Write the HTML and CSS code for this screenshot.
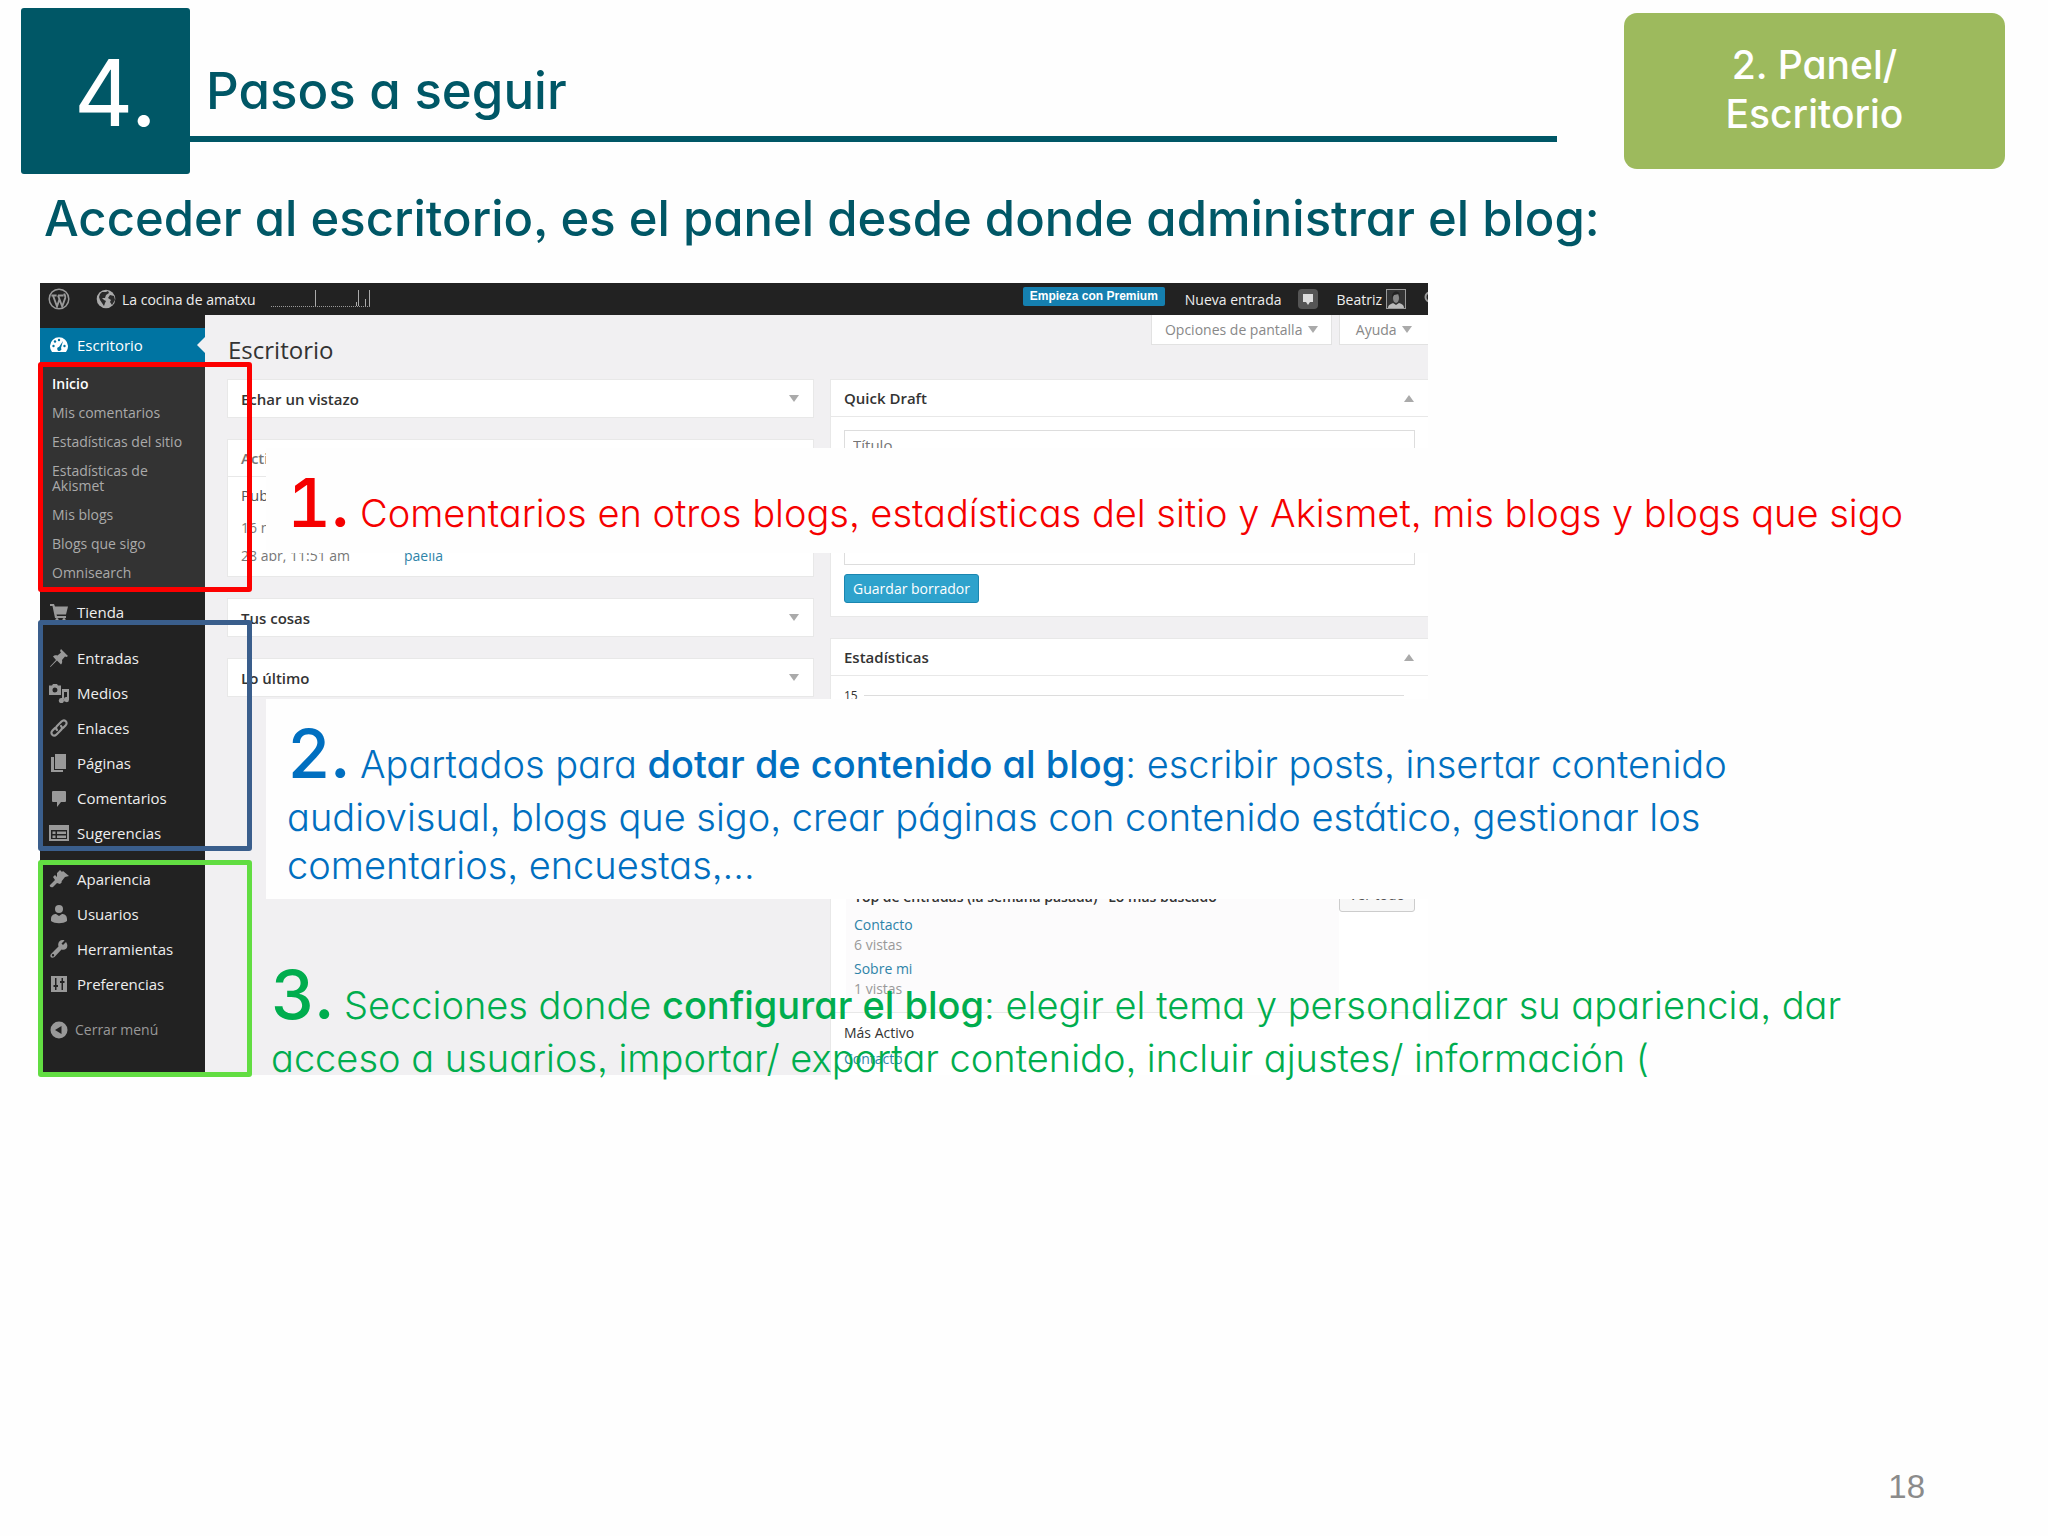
FILE: index.html
```html
<!DOCTYPE html>
<html lang="es">
<head>
    <meta charset="UTF-8">
    <meta name="viewport" content="width=device-width, initial-scale=1.0">
    <title>Pasos a seguir</title>
    <link rel="stylesheet" href="styles.css">
</head>
<body>
    <header class="slide-header">
        <div class="number">4.</div>
        <h1>Pasos a seguir</h1>
        <div class="badge">2. Panel/<br>Escritorio</div>
    </header>
    <h2 class="lead">Acceder al escritorio, es el panel desde donde administrar el blog:</h2>

    <main class="stage">
        <div class="dashboard">
            <div class="topbar">
                <svg class="wp" viewBox="0 0 22 22"><circle cx="11" cy="11" r="9.8" fill="none" stroke="#999" stroke-width="1.5"/><path d="M3.4 7.5h5.2M10 7.5h5.6M5 7.5l4 11 2.4-7M10 7.5l1.4 3.5 2.8 7.5 3-8.5c.6-2-.6-3.4-1-4.5" fill="none" stroke="#999" stroke-width="1.9"/></svg>
                <svg class="globe" viewBox="0 0 20 20"><circle cx="10" cy="10" r="9.3" fill="#aaa"/><path d="M6 3l4 0 2-1 1 2-3 2-1 3-3 0 2 2 2 1-1 2-1 3-2-3-2-3-1-3 1-3zM14 6l4 1 1 4-3 5-2-3 1-2-3-2z" fill="#2b2b2b"/></svg>
                <a href="#">La cocina de amatxu</a>
                <svg class="spark" viewBox="0 0 100 18"><path d="M0 16.5h100" stroke="#999" stroke-dasharray="1 1"/><path d="M44.500 0v16M87.500 0v16M98.500 0v16M94.500 9v7M85.500 12v4" stroke="#aaa" fill="none"/></svg>
                <div class="account">
                    <button class="premium">Empieza con Premium</button>
                    <a href="#">Nueva entrada</a>
                    <svg class="notes" viewBox="0 0 20 20"><rect width="20" height="20" rx="4" fill="#555"/><path d="M5 5h10v8h-3l-2 3-2-3H5z" fill="#ddd"/></svg>
                    <a href="#">Beatriz</a>
                    <svg class="avatar" viewBox="0 0 20 20"><rect x=".5" y=".5" width="19" height="19" fill="#333" stroke="#999"/><path d="M2 19c0-3 3-4 5-5l3 2 3-2c3 1 5 2 5 5z" fill="#bbb"/><ellipse cx="10" cy="9" rx="3" ry="5" fill="#888"/><path d="M6 9c-1-8 9-9 8 0l-1-4-5 1z" fill="#222"/></svg>
                    <svg class="search" viewBox="0 0 4 20"><circle cx="6" cy="8" r="4.500" fill="none" stroke="#999" stroke-width="2"/></svg>
                </div>
            </div>

            <div class="workspace">
                <nav class="sidebar">
                    <a class="item current" href="#"><svg viewBox="0 0 20 20"><path d="M3 17a9 9 0 1 1 14 0z" fill="#fff"/><g fill="#0074a2"><circle cx="4.500" cy="11" r="1.200"/><circle cx="6" cy="6.500" r="1.200"/><circle cx="10" cy="5" r="1.200"/><circle cx="15.500" cy="11" r="1.200"/><path d="M14 6l-2 7a2 2 0 1 1-2-1z"/></g></svg>Escritorio</a>
                    <div class="submenu">
                        <a class="on" href="#">Inicio</a>
                        <a href="#">Mis comentarios</a>
                        <a href="#">Estadísticas del sitio</a>
                        <a href="#">Estadísticas de Akismet</a>
                        <a href="#">Mis blogs</a>
                        <a href="#">Blogs que sigo</a>
                        <a href="#">Omnisearch</a>
                    </div>
                    <div class="group">
                        <a class="item" href="#"><svg viewBox="0 0 20 20"><path d="M1 2h4l1 2.500H19l-2 8H7.500l.5 1.500H17V16H6L3.500 4H1z"/><circle cx="8" cy="17.500" r="1.500"/><circle cx="15" cy="17.500" r="1.500"/></svg>Tienda</a>
                    </div>
                    <div class="group">
                        <a class="item" href="#"><svg viewBox="0 0 20 20"><path d="M12 1l7 7-1.500 1-1.500-.5-3 3.500c.5 2 0 3.500-1 4.500l-4-4L1.500 19 1 18.500 7 12 4 8.500c1-1 2.500-1.500 4.500-1l3.500-3-1-1.500z"/></svg>Entradas</a>
                        <a class="item" href="#"><svg viewBox="0 0 20 20"><path fill-rule="evenodd" d="M0 2.500h3L4 1h4l1 1.500h3V12H0zM6 4.500a2.500 2.500 0 1 0 0 5 2.500 2.500 0 0 0 0-5zM13 6h7v10.500a2.600 2.600 0 1 1-2-2.500V9h-3v8.500a2.600 2.600 0 1 1-2-2.500z"/></svg>Medios</a>
                        <a class="item" href="#"><svg viewBox="0 0 20 20"><g fill="none" stroke="#999" stroke-width="2.200" stroke-linecap="round"><path d="M8 12c-2-2-1-3 0-4l4.500-4.500c3-3 7 1 4 4L14 10"/><path d="M12 8c2 2 1 3 0 4l-4.500 4.500c-3 3-7-1-4-4L6 10"/></g></svg>Enlaces</a>
                        <a class="item" href="#"><svg viewBox="0 0 20 20"><path d="M6 1h11v15H6zM2 4h3v13h9v2H2z"/></svg>Páginas</a>
                        <a class="item" href="#"><svg viewBox="0 0 20 20"><path d="M4 3h12q1 0 1 1v9q0 1-1 1h-4l-4 5v-5H4q-1 0-1-1V4q0-1 1-1z"/></svg>Comentarios</a>
                        <a class="item" href="#"><svg viewBox="0 0 20 20"><path fill-rule="evenodd" d="M0 2h20v16H0zM2 7v9h16V7zM3.500 8.500h3v2.500h-3zM8 8.500h9v2.500H8zM3.500 12.500h3v2.500h-3zM8 12.500h9v2.500H8z"/></svg>Sugerencias</a>
                    </div>
                    <div class="group">
                        <a class="item" href="#"><svg viewBox="0 0 20 20"><path d="M8 4l3-3 2 2 1-1 6 5-4 1-4 5-3-3-1-1zM6 6l7 7-2 2-3-1-4 4c-2 1-4-1-3-2l5-5-2-3z"/></svg>Apariencia</a>
                        <a class="item" href="#"><svg viewBox="0 0 20 20"><circle cx="10" cy="5" r="4"/><path d="M2 15c0-4 3-5 5-5l3 2 3-2c2 0 5 1 5 5v2c-4 3-12 3-16 0z"/></svg>Usuarios</a>
                        <a class="item" href="#"><svg viewBox="0 0 20 20"><path fill-rule="evenodd" d="M17 3l-3 3-1.500-1.500L15.500 1.500C12 0 8 3 9.500 7.500L2 15c-2 3 1 5 3.500 3l7-7.500c4 1.500 8-2.500 4.500-7.500zM4 15a1.200 1.200 0 1 1 0 2.400A1.200 1.200 0 0 1 4 15z"/></svg>Herramientas</a>
                        <a class="item" href="#"><svg viewBox="0 0 20 20"><path fill-rule="evenodd" d="M2 2h16v16H2zM6 4v7H4.500v2H6v3h1.500v-3H9v-2H7.500V4zM12.500 4v3H11v2h1.500v7H14V9h1.500V7H14V4z"/></svg>Preferencias</a>
                    </div>
                    <div class="group">
                        <a class="item collapse" href="#"><svg viewBox="0 0 20 20"><path fill-rule="evenodd" d="M10 1.500a8.500 8.500 0 1 0 0 17 8.500 8.500 0 0 0 0-17zM12.500 6v8L6 10z"/></svg>Cerrar menú</a>
                    </div>
                </nav>

                <div class="content">
                    <div class="screen-tabs">
                        <button>Opciones de pantalla <span class="down"></span></button>
                        <button class="help">Ayuda <span class="down"></span></button>
                    </div>
                    <h3>Escritorio</h3>
                    <div class="columns">
                        <div class="column">
                            <section class="box"><h4>Echar un vistazo<span class="down"></span></h4></section>
                            <section class="box activity">
                                <h4>Actividad</h4>
                                <p class="recent">Publicado</p>
                                <p>16 nov</p>
                                <p><span class="date">28 abr, 11:51 am</span><a href="#">paella</a></p>
                            </section>
                            <section class="box"><h4>Tus cosas<span class="down"></span></h4></section>
                            <section class="box"><h4>Lo último<span class="down"></span></h4></section>
                        </div>
                        <div class="column wide">
                            <section class="box draft">
                                <h4>Quick Draft<span class="up"></span></h4>
                                <form>
                                    <input type="text" placeholder="Título" aria-label="Título">
                                    <textarea aria-label="Contenido"></textarea>
                                    <button type="button">Guardar borrador</button>
                                </form>
                            </section>
                            <section class="box stats">
                                <h4>Estadísticas<span class="up"></span></h4>
                                <div class="chart"><span>15</span><i></i></div>
                                <div class="top">
                                    <div class="posts">
                                        <p class="heading">Top de entradas (la semana pasada) &nbsp; Lo más buscado</p>
                                        <a href="#">Contacto</a>
                                        <p>6 vistas</p>
                                        <a href="#">Sobre mi</a>
                                        <p>1 vistas</p>
                                    </div>
                                    <button>Ver todo</button>
                                </div>
                                <div class="active">
                                    <p>Más Activo</p>
                                    <a href="#">Contacto</a>
                                </div>
                            </section>
                        </div>
                    </div>
                </div>
            </div>
        </div>

        <div class="frame red"></div>
        <div class="frame blue"></div>
        <div class="frame green"></div>

        <p class="note one"><b class="step">1.</b> Comentarios en otros blogs, estadísticas del sitio y Akismet, mis blogs y blogs que sigo</p>
        <p class="note two"><b class="step">2.</b> Apartados para <b>dotar de contenido al blog</b>: escribir posts, insertar contenido<br>audiovisual, blogs que sigo, crear páginas con contenido estático, gestionar los<br>comentarios, encuestas,…</p>
        <p class="note three"><b class="step">3.</b> Secciones donde <b>configurar el blog</b>: elegir el tema y personalizar su apariencia, dar<br>acceso a usuarios, importar/ exportar contenido, incluir ajustes/ información (</p>
    </main>

    <footer>18</footer>
</body>
</html>
```
FILE: styles.css
```css
* {
    box-sizing: border-box;
}

body {
    margin: 0;
    min-height: 100vh;
    display: flex;
    flex-direction: column;
    background: #fefefe;
    color: #333;
    font-family: Inter, "Liberation Sans", sans-serif;
    /* single-storey a */
    font-feature-settings: "cv11", "ss03";
}

h1, h2, h3, h4, p {
    margin: 0;
}

a {
    color: inherit;
    text-decoration: none;
}

button, input, textarea {
    font: inherit;
}

svg {
    flex: none;
}

.slide-header {
    display: flex;
    align-items: flex-start;
    padding: 8px 43px 0 21px;
}

.number {
    width: 169px;
    height: 166px;
    padding-left: 20px;
    border-radius: 3px;
    background: #005766;
    color: #fff;
    font-size: 92px;
    font-weight: 400;
    line-height: 170px;
    text-align: center;
}

.slide-header h1 {
    flex: 1;
    height: 134px;
    margin-right: 67px;
    padding: 48px 0 0 16px;
    border-bottom: 6px solid #005766;
    color: #005766;
    font-size: 51px;
    font-weight: 500;
    line-height: 70px;
}

.badge {
    width: 381px;
    height: 156px;
    margin-top: 5px;
    padding-top: 27px;
    border-radius: 13px;
    background: #9dba5d;
    color: #fff;
    font-size: 39px;
    font-weight: 500;
    line-height: 49px;
    text-align: center;
}

.lead {
    margin: 0 0 19px 44px;
    color: #005766;
    font-size: 49px;
    font-weight: 500;
    line-height: 90px;
    white-space: nowrap;
}

.stage {
    position: relative;
    flex: 1;
}

.dashboard {
    height: 792px;
    margin: 0 620px 0 40px;
    overflow: hidden;
    background: #f1f0f2;
    font-family: "Open Sans", "Noto Sans", sans-serif;
    font-feature-settings: normal;
    font-size: 15px;
}

.topbar {
    display: flex;
    align-items: center;
    height: 32px;
    padding-left: 8px;
    background: #222;
    color: #eee;
    font-size: 14px;
}

.wp {
    width: 22px;
}

.globe {
    width: 20px;
    margin: 0 6px 0 26px;
}

.spark {
    width: 100px;
    margin-left: 15px;
}

.account {
    display: flex;
    align-items: center;
    margin-left: auto;
}

.premium {
    width: 142px;
    height: 19px;
    margin: 0 20px 6px 0;
    padding: 0;
    border: 0;
    border-radius: 2px;
    background: #1580b0;
    color: #fff;
    font: bold 12px "Liberation Sans", sans-serif;
}

.notes {
    width: 20px;
    margin: 0 19px 0 16px;
}

.avatar {
    width: 20px;
    margin: 0 18px 0 4px;
}

.search {
    width: 4px;
}

.workspace {
    display: flex;
    height: 760px;
}

.sidebar {
    display: flex;
    flex-direction: column;
    width: 165px;
    padding-top: 13px;
    background: #222;
}

.item {
    display: flex;
    align-items: center;
    gap: 8px;
    height: 35px;
    padding-left: 9px;
    color: #eee;
}

.item svg {
    width: 20px;
    fill: #999;
}

.current {
    position: relative;
    height: 34px;
    background: #0074a2;
    color: #fff;
}

.current::after {
    content: "";
    position: absolute;
    right: 0;
    border: 8px solid transparent;
    border-right-color: #f1f0f2;
    border-left-width: 0;
}

.submenu {
    padding: 7px 20px 0 12px;
    background: #333;
    color: #aaa;
    font-size: 14px;
    line-height: 15px;
}

.submenu a {
    display: block;
    padding: 7px 0;
}

.submenu .on {
    color: #fff;
    font-weight: 600;
}

.group {
    margin-top: 11px;
}

.submenu + .group {
    margin-top: 7px;
}

.collapse {
    gap: 6px;
    color: #999;
    font-size: 14px;
}

.content {
    flex: 1;
    min-width: 0;
    padding-left: 23px;
}

.screen-tabs {
    display: flex;
    justify-content: flex-end;
    gap: 7px;
    height: 30px;
}

.screen-tabs button {
    width: 181px;
    padding: 0;
    border: 1px solid #e2e2e2;
    border-top: 0;
    background: #fff;
    color: #888;
    font-size: 14px;
}

.screen-tabs .help {
    width: 89px;
    border-right: 0;
}

.down, .up {
    display: inline-block;
    border: 5px solid transparent;
}

.down {
    border-top: 7px solid #aaa;
    border-bottom: 0;
}

.up {
    border-bottom: 7px solid #aaa;
    border-top: 0;
}

.screen-tabs .down {
    margin: 0 0 2px 2px;
}

.content h3 {
    margin-bottom: 25px;
    font-size: 24px;
    font-weight: 400;
    line-height: 10px;
}

.columns {
    display: flex;
    gap: 18px;
}

.column {
    display: flex;
    flex: 585;
    flex-direction: column;
    gap: 23px;
}

.wide {
    flex: 597;
}

.box {
    background: #fff;
    box-shadow: 0 0 0 1px #e8e8e8;
}

.box h4 {
    display: flex;
    align-items: center;
    justify-content: space-between;
    height: 37px;
    padding: 0 14px 0 13px;
    font-size: 15px;
    font-weight: 600;
}

.activity h4, .wide h4 {
    border-bottom: 1px solid #e8e8e8;
}

.activity {
    height: 136px;
    color: #777;
    font-size: 14px;
}

.activity p {
    padding-left: 13px;
    line-height: 28px;
}

.activity .recent {
    color: #555;
    font-size: 15px;
    line-height: 37px;
}

.date {
    display: inline-block;
    width: 163px;
}

.box a {
    color: #2e83a8;
}

.draft form {
    display: flex;
    flex-direction: column;
    padding: 13px;
}

.draft input, .draft textarea {
    border: 1px solid #ddd;
    outline: 0;
    background: #fff;
    resize: none;
}

.draft input {
    height: 29px;
    padding: 0 8px;
}

.draft textarea {
    height: 94px;
    margin: 12px 0 9px;
}

.draft button {
    align-self: flex-start;
    width: 135px;
    height: 29px;
    padding: 0;
    border: 1px solid #1b86b0;
    border-radius: 3px;
    background: #2ea2cc;
    color: #fff;
    font-size: 14px;
}

.stats {
    height: 440px;
    font-size: 14px;
}

.chart {
    display: flex;
    align-items: center;
    gap: 6px;
    height: 201px;
    padding: 0 24px 162px 13px;
    font-size: 12px;
}

.chart i {
    flex: 1;
    height: 1px;
    background: #ddd;
}

.top {
    display: flex;
    height: 136px;
    border-bottom: 1px solid #e8e8e8;
}

.posts {
    flex: 1;
    margin-left: 15px;
    padding: 10px 0 0 8px;
    background: #fcfbfc;
    line-height: 20px;
}

.posts .heading {
    margin-bottom: 8px;
    color: #333;
    font-weight: 600;
    white-space: nowrap;
}

.posts p {
    margin-bottom: 4px;
    color: #999;
}

.top button {
    width: 76px;
    height: 35px;
    margin-right: 13px;
    border: 1px solid #ccc;
    border-radius: 3px;
    background: #f7f7f7;
    color: #555;
}

.active {
    padding: 7px 13px;
    line-height: 26px;
}

.frame {
    position: absolute;
    left: 38px;
    width: 214px;
    border: 5px solid;
    border-radius: 3px;
}

.red {
    top: 79px;
    height: 230px;
    border-color: #fd0000;
}

.blue {
    top: 337px;
    height: 231px;
    border-color: #3a5e8c;
}

.green {
    top: 577px;
    height: 217px;
    border-color: #62dd42;
}

.note {
    position: absolute;
    left: 266px;
    right: 0;
    padding: 14px 0 0 21px;
    font-size: 38px;
    font-weight: 300;
    line-height: 48px;
    white-space: nowrap;
}

.note b {
    font-weight: 500;
}

.note .step {
    font-size: 68px;
    font-variant-numeric: tabular-nums;
    font-weight: 500;
    line-height: 80px;
}

.one {
    top: 165px;
    height: 105px;
    background: #fefefe;
    color: #f50000;
}

.two {
    top: 416px;
    height: 200px;
    background: #fefefe;
    color: #006fc0;
}

.three {
    top: 657px;
    padding-left: 5px;
    color: #00ad4e;
}

footer {
    padding: 0 123px 30px 0;
    color: #8b8b8b;
    font: 33px/38px "Liberation Sans", sans-serif;
    text-align: right;
}
```
